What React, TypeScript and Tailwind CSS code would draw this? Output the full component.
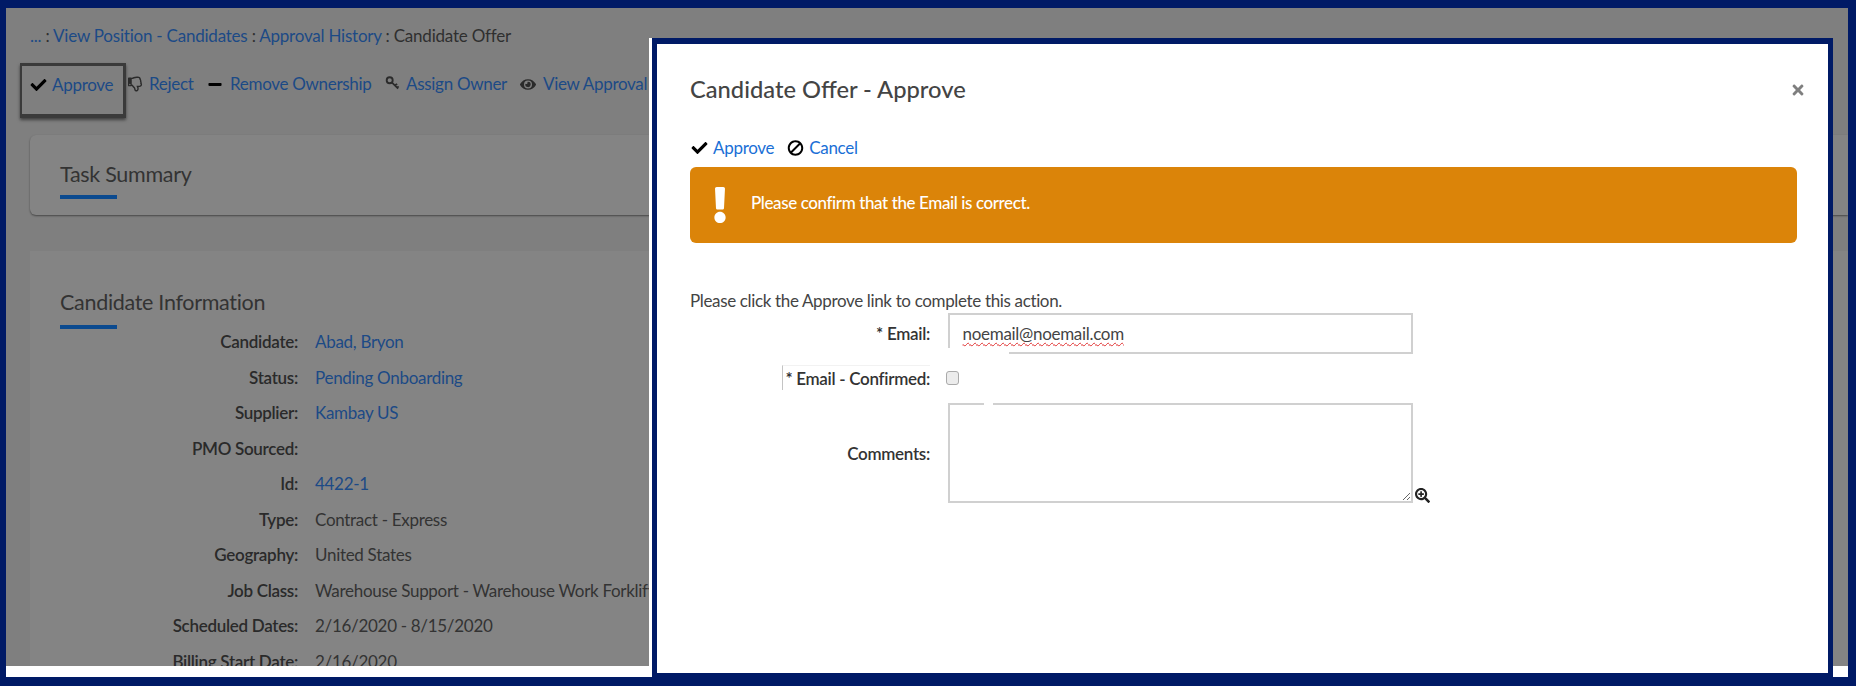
import React from "react";
import { FaBan, FaCheck, FaExclamation, FaEye, FaMinus, FaRegThumbsDown, FaSearchPlus, FaTimes } from "react-icons/fa";

const ROWS: { label: string; value?: string; link?: boolean }[] = [
  { label: "Candidate:", value: "Abad, Bryon", link: true },
  { label: "Status:", value: "Pending Onboarding", link: true },
  { label: "Supplier:", value: "Kambay US", link: true },
  { label: "PMO Sourced:" },
  { label: "Id:", value: "4422-1", link: true },
  { label: "Type:", value: "Contract - Express" },
  { label: "Geography:", value: "United States" },
  { label: "Job Class:", value: "Warehouse Support - Warehouse Work Forklift Operator" },
  { label: "Scheduled Dates:", value: "2/16/2020 - 8/15/2020" },
  { label: "Billing Start Date:", value: "2/16/2020" },
];

function ToolbarLink({ icon, label, className }: { icon: React.ReactNode; label: string; className: string }) {
  return (
    <span className={`flex items-center whitespace-nowrap ${className}`}>
      {icon}
      <span className="text-[#1c4a86]">{label}</span>
    </span>
  );
}

function KeyIcon() {
  return (
    <svg viewBox="0 0 16 16" className="mr-[6px] mb-[3px] h-[16px] w-[15px] text-[#2b2b2b]" fill="none" stroke="currentColor">
      <circle cx="5" cy="5" r="3.2" strokeWidth="2" />
      <path d="M7.5 7.5L14 14M10.5 10.5l2.5-1.5M13 13l1.5-1.5" strokeWidth="1.8" />
    </svg>
  );
}

export default function App() {
  return (
    <div
      className="relative h-[686px] w-[1856px] overflow-hidden bg-[#001a66] pt-2 pr-2 pb-[9px] pl-[6px] text-[17px] tracking-[-0.3px]"
      style={{ fontFamily: "Lato, sans-serif" }}
    >
      <div className="h-full overflow-hidden bg-white">
        {/* page behind the dialog */}
        <div className="h-[658px] overflow-hidden bg-[#7f7f7f]">
          <div className="pt-[18px] pl-[24px] leading-5 tracking-[-0.22px] text-[#2f2f2f]">
            <span className="text-[#1c4a86]">...</span> : <span className="text-[#1c4a86]">View Position - Candidates</span> : <span className="text-[#1c4a86]">Approval History</span> : Candidate Offer
          </div>

          <div className="mt-[17px] flex h-[55px] items-start pl-[14px]">
            <div className="flex h-[55px] w-[106px] items-start border-t-[3px] border-r-[3px] border-b-[4px] border-l-[2px] border-[#3a3a3a] pt-[9px] pl-[8px] shadow-[0_2px_3px_rgba(0,0,0,0.5)]">
              <FaCheck className="mr-[5px] mt-[2px] h-[16px] w-[17px] text-black" />
              <span className="leading-5 text-[#1c4a86]">Approve</span>
            </div>
            <div className="flex h-[46px] items-center pb-[4px] leading-5">
              <ToolbarLink className="w-[81px] pl-[2px]" label="Reject" icon={<FaRegThumbsDown className="mr-[6px] h-[18px] w-[15px] text-[#2b2b2b]" />} />
              <ToolbarLink className="w-[178px]" label="Remove Ownership" icon={<FaMinus className="mr-[7px] h-[15px] w-[16px] text-black" />} />
              <ToolbarLink className="w-[135px]" label="Assign Owner" icon={<KeyIcon />} />
              <ToolbarLink className="" label="View Approval" icon={<FaEye className="mr-[7px] h-[15px] w-[16px] text-[#2b2b2b]" />} />
            </div>
          </div>

          <div className="mt-[17px] ml-[24px] h-[80px] rounded-l-md bg-[#848484] pt-[26px] pl-[30px] shadow-[0_1px_2px_rgba(0,0,0,0.45)]">
            <div className="text-[21.5px] leading-[26px] text-[#333]">Task Summary</div>
            <div className="mt-[8px] h-1 w-[57px] bg-[#0b4a8f]" />
          </div>

          <div className="mt-[36px] ml-[24px] h-[420px] bg-[#848484] pt-[38px] pl-[30px]">
            <div className="text-[21.5px] leading-[27px] text-[#333]">Candidate Information</div>
            <div className="mt-[9px] h-1 w-[57px] bg-[#0b4a8f]" />
            <div className="mt-[-5px] ml-[-30px] flex flex-col">
              {ROWS.map((row) => (
                <div key={row.label} className="flex h-[35.5px] items-center whitespace-nowrap">
                  <div className="w-[268px] text-right font-semibold text-[#2a2a2a]">{row.label}</div>
                  {row.value && (
                    <div className={`ml-[17px] ${row.link ? "text-[#1c4a86]" : "text-[#333]"}`}>{row.value}</div>
                  )}
                </div>
              ))}
            </div>
          </div>
        </div>
      </div>

      {/* dialog */}
      <div className="absolute top-[38px] bottom-[9px] left-[649px] w-[1184px] border-l-[3px] border-white">
        <div className="h-full border-[5px] border-t-[6px] border-b-[4px] border-[#001a66]">
          <div className="relative h-full bg-white pr-[31px] pl-[33px] text-[#444]">
            <FaTimes className="absolute top-[38px] right-[24px] h-[16px] w-[12px] text-[#7f7f7f]" />
            <h2 className="pt-[30px] text-[23.7px] leading-[30px] font-medium tracking-normal text-[#444]">Candidate Offer - Approve</h2>

            <div className="mt-[32px] flex h-6 items-center text-[#1a6fd6]">
              <FaCheck className="mr-[5px] ml-[1px] h-[16px] w-[17px] text-black" />
              <span>Approve</span>
              <FaBan className="mr-[5px] ml-[13px] h-[16px] w-[17px] -scale-x-100 text-black" />
              <span>Cancel</span>
            </div>

            <div className="mt-[7px] flex h-[76px] w-[1107px] items-center rounded-[6px] bg-[#db8409] pl-[18px] font-medium tracking-[-0.4px] text-white">
              <FaExclamation className="mr-[19px] h-[36px] w-[24px]" />
              <span className="mb-[5px]">Please confirm that the Email is correct.</span>
            </div>

            <p className="mt-[48px] leading-5 tracking-[-0.35px] text-[#444]">Please click the Approve link to complete this action.</p>

            <div className="mt-[2px] grid grid-cols-[240px_465px_auto] items-center gap-x-[17.5px] font-semibold text-[#333]">
              <label className="text-right">* Email:</label>
              <div className="relative flex h-[41px] items-center border-2 border-[#d0d0d0] pl-[13px] font-normal text-[#444]">
                <span className="underline decoration-[#e03030] decoration-wavy decoration-1 underline-offset-2">noemail@noemail.com</span>
                {/* rub-out left in the screenshot */}
                <div className="absolute -bottom-[2px] -left-[2px] h-[6px] w-[61px] bg-white" />
              </div>
              <span />

              <div className="mt-[11px] h-[38px] justify-self-end">
                <label className="block h-[25px] border-t border-l border-t-[#f2f2f2] border-l-[#c4c4c4] pl-[2px] leading-[25px]">* Email - Confirmed:</label>
              </div>
              <div className="mt-[11px] h-[38px] pt-[6px]">
                <input type="checkbox" className="ml-[-2px] block h-[14px] w-[13px] appearance-none rounded-[3px] border border-[#aaa] bg-[#ececec]" />
              </div>
              <span />

              <label className="mt-[2px] self-center text-right">Comments:</label>
              <div className="relative h-[100px] w-[465px]">
                <textarea className="block h-[100px] w-[465px] resize border-2 border-[#d0d0d0] bg-white outline-none" />
                <div className="absolute top-0 left-[36px] h-[2px] w-[9px] bg-white" />
              </div>
              <FaSearchPlus className="ml-[-15px] h-[15px] w-[15px] self-end text-[#222]" />
            </div>
          </div>
        </div>
      </div>
    </div>
  );
}
